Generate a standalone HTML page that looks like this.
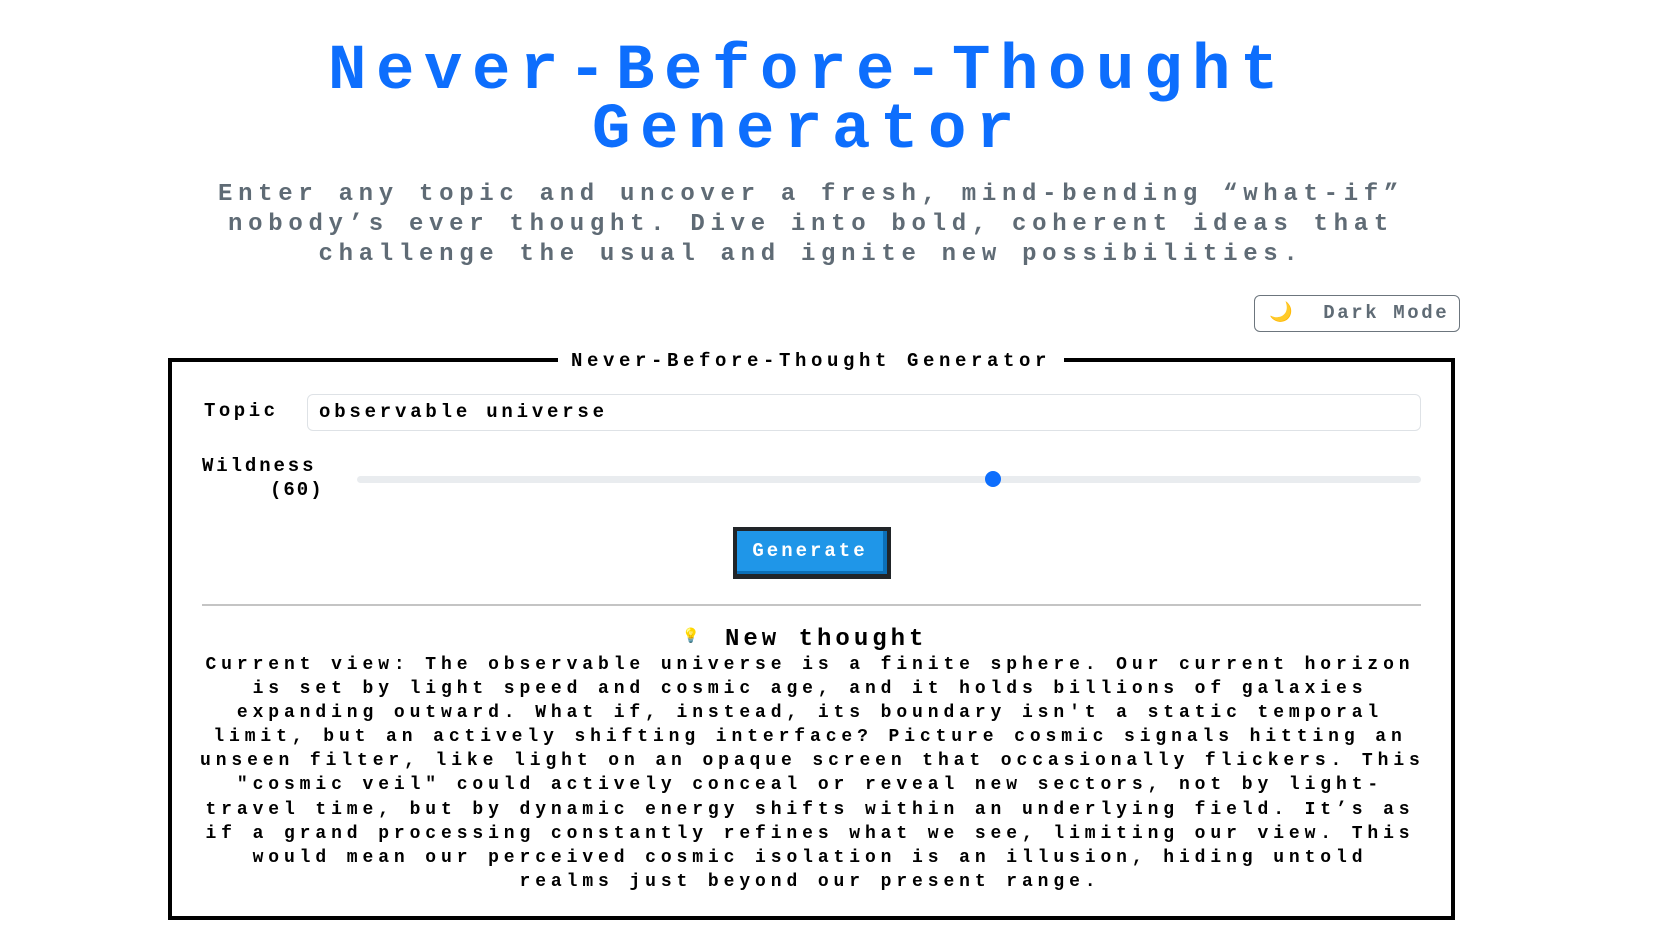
<!DOCTYPE html>
<html><head><meta charset="utf-8"><style>
*{margin:0;padding:0;box-sizing:border-box}
body{width:1654px;height:930px;background:#fff;position:relative;overflow:hidden;font-family:"Liberation Mono","DejaVu Sans Mono",monospace;font-weight:bold}
.c{position:absolute;width:1654px;text-align:center;white-space:nowrap}
.t{left:-19px;color:#0d6efd;font-size:64px;letter-spacing:9.6px;line-height:58px}
.s{left:-16px;color:#5f6b75;font-size:24px;letter-spacing:5.7px;line-height:30px}
.abs{position:absolute;white-space:nowrap}
.p{position:absolute;left:200px;width:1220px;text-align:center;font-size:18px;letter-spacing:4.9px;line-height:24.1px;color:#000;white-space:nowrap}
</style></head><body>
<div class="c t" style="top:43px">Never-Before-Thought</div>
<div class="c t" style="top:102px">Generator</div>
<div class="c s" style="top:180px">Enter any topic and uncover a fresh, mind-bending “what-if”</div>
<div class="c s" style="top:210px">nobody’s ever thought. Dive into bold, coherent ideas that</div>
<div class="c s" style="top:240px">challenge the usual and ignite new possibilities.</div>

<div class="abs" style="left:1254px;top:295px;width:206px;height:37px;border:1.5px solid #6c757d;border-radius:6px;color:#5f6b75;font-size:19px;letter-spacing:2.6px;line-height:34px;padding-left:14px">🌙&nbsp; Dark Mode</div>

<div class="abs" style="left:168px;top:358px;width:1287px;height:562px;border:4px solid #000"></div>
<div class="abs" style="left:558px;top:349px;width:506px;height:24px;background:#fff;text-align:center;font-size:19px;letter-spacing:4.6px;line-height:24px">Never-Before-Thought Generator</div>

<div class="abs" style="left:204px;top:400px;font-size:19px;letter-spacing:3.5px">Topic</div>
<div class="abs" style="left:307px;top:394px;width:1114px;height:37px;border:1px solid #dee2e6;border-radius:6px;font-size:19px;letter-spacing:3.8px;line-height:35px;padding-left:11px">observable universe</div>

<div class="abs" style="left:202px;top:455px;font-size:19px;letter-spacing:2.9px">Wildness</div>
<div class="abs" style="left:270px;top:479px;font-size:19px;letter-spacing:2px">(60)</div>
<div class="abs" style="left:357px;top:476px;width:1064px;height:7px;background:#e9ecef;border-radius:4px"></div>
<div class="abs" style="left:985px;top:471px;width:16px;height:16px;background:#0d6efd;border-radius:50%"></div>

<div class="abs" style="left:733px;top:527px;width:158px;height:52px;background:#212529"></div>
<div class="abs" style="left:737px;top:531px;width:150px;height:43px;background:#1f96e8;border-right:4px solid #0b6fb8;border-bottom:3px solid #0b6fb8;color:#fff;font-size:19px;letter-spacing:3px;text-align:center;line-height:40px">Generate</div>

<div class="abs" style="left:202px;top:604px;width:1219px;height:1.5px;background:#c4c4c4"></div>

<div class="abs" style="left:682px;top:628px;font-size:14px">💡</div>
<div class="abs" style="left:725px;top:626px;font-size:24px;letter-spacing:4px;line-height:28px">New thought</div>

<div class="p" style="top:653px">Current view: The observable universe is a finite sphere. Our current horizon<br>is set by light speed and cosmic age, and it holds billions of galaxies<br>expanding outward. What if, instead, its boundary isn't a static temporal<br>limit, but an actively shifting interface? Picture cosmic signals hitting an<br>unseen filter, like light on an opaque screen that occasionally flickers. This<br>"cosmic veil" could actively conceal or reveal new sectors, not by light-<br>travel time, but by dynamic energy shifts within an underlying field. It’s as<br>if a grand processing constantly refines what we see, limiting our view. This<br>would mean our perceived cosmic isolation is an illusion, hiding untold<br>realms just beyond our present range.</div>
</body></html>
